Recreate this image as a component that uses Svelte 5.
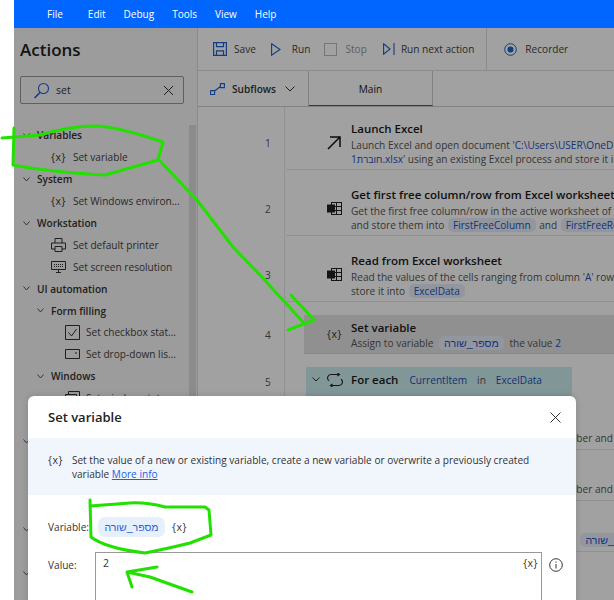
<script>
	const menu = ['File', 'Edit', 'Debug', 'Tools', 'View', 'Help'];

	// sidebar tree: group > sub or action > nested action
	const tree = [
		{ label: 'Variables', kind: 'group' },
		{ label: 'Set variable', kind: 'action', icon: 'x' },
		{ label: 'System', kind: 'group' },
		{ label: 'Set Windows environ...', kind: 'action', icon: 'x' },
		{ label: 'Workstation', kind: 'group' },
		{ label: 'Set default printer', kind: 'action', icon: 'printer' },
		{ label: 'Set screen resolution', kind: 'action', icon: 'screen' },
		{ label: 'UI automation', kind: 'group' },
		{ label: 'Form filling', kind: 'sub' },
		{ label: 'Set checkbox stat...', kind: 'nested', icon: 'check' },
		{ label: 'Set drop-down lis...', kind: 'nested', icon: 'drop' },
		{ label: 'Windows', kind: 'sub' },
		{ label: 'Set window state', kind: 'nested', icon: 'window' },
		{ label: 'Set window visibility', kind: 'nested', icon: 'window' },
		{ label: 'Excel', kind: 'group' },
		{ label: 'Set active worksheet', kind: 'action', icon: 'x' },
		{ label: 'Set cell color', kind: 'action', icon: 'x' },
		{ label: 'Set column width', kind: 'action', icon: 'x' },
		{ label: 'Database', kind: 'group' },
		{ label: 'Set connection', kind: 'action', icon: 'x' },
		{ label: 'Web', kind: 'group' }
	];
</script>

{#snippet excelIcon()}
	<svg width="15" height="13" viewBox="0 0 15 13" fill="none">
		<rect x="4.500" y="0.500" width="10" height="12" stroke="#222" />
		<path d="M4.500 4.500h10M4.500 8.500h10M9.500 0.500v12" stroke="#222" />
		<rect x="0" y="2.500" width="8" height="8" fill="#222" />
	</svg>
{/snippet}

<div class="app">
	<header class="menubar">
		{#each menu as item}
			<span>{item}</span>
		{/each}
	</header>

	<div class="body">
		<aside class="sidebar">
			<h1>Actions</h1>
			<div class="search">
				<svg width="17" height="17" viewBox="0 0 17 17" fill="none" stroke="#1f5fd0" stroke-width="1.100">
					<circle cx="10.500" cy="6.500" r="5" />
					<path d="M7 10.500 1.500 16" stroke-width="1.600" />
				</svg>
				<span class="query">set</span>
				<svg width="11" height="11" viewBox="0 0 11 11" stroke="#333" stroke-width="1">
					<path d="M1 1l9 9M10 1l-9 9" />
				</svg>
			</div>
			<div class="tree">
				{#each tree as node}
					<div class="node {node.kind}">
						{#if node.kind === 'group' || node.kind === 'sub'}
							<svg width="7" height="5" viewBox="0 0 7 5" fill="none" stroke="#555">
								<path d="M.5.500 3.500 4 6.500.5" />
							</svg>
						{:else if node.icon === 'x'}
							<span class="varicon">{'{x}'}</span>
						{:else if node.icon === 'printer'}
							<svg width="15" height="14" viewBox="0 0 15 14" fill="none" stroke="#333">
								<path d="M4 5V.5h7V5M4 11H.5V5h14v6H11M4 8.500h7v5H4z" />
							</svg>
						{:else if node.icon === 'screen'}
							<svg width="15" height="12" viewBox="0 0 15 12" fill="none" stroke="#333">
								<path d="M.5.500h14v8H.5zM7.500 8.500v3M5 11.500h5" />
								<path d="M3 3.500h9M3 5.500h9" stroke-dasharray="1 1" />
							</svg>
						{:else if node.icon === 'check'}
							<svg width="15" height="15" viewBox="0 0 15 15" fill="none" stroke="#333">
								<path d="M.5.500h14v14H.5zM3.500 7.500 6.500 11 11.500 4" />
							</svg>
						{:else if node.icon === 'drop'}
							<svg width="15" height="10" viewBox="0 0 15 10" fill="none" stroke="#333">
								<path d="M.5.500h14v9H.5zM10 4h2" />
							</svg>
						{:else if node.icon === 'window'}
							<svg width="15" height="14" viewBox="0 0 15 14" fill="none" stroke="#333">
								<path d="M3.500 3V.5h11v9H12M.5 3.500h11v10H.5zM.5 6h11" />
							</svg>
						{/if}
						<span>{node.label}</span>
					</div>
				{/each}
			</div>
			<div class="scrollbar"></div>
		</aside>

		<main class="main">
			<div class="toolbar">
				<div class="tool save">
					<svg width="14" height="14" viewBox="0 0 14 14" fill="none" stroke="#1f5fd0" stroke-width="1.200">
						<path d="M.6.600h12.800v12.800H.6zM3.500.600v4h7v-4M3.500 13.400v-4.500h7v4.500" />
					</svg>
					<span>Save</span>
				</div>
				<div class="tool run">
					<svg width="10" height="13" viewBox="0 0 10 13" fill="none" stroke="#1f5fd0" stroke-width="1.100">
						<path d="M.6.800 9 6.500.6 12.200z" />
					</svg>
					<span>Run</span>
				</div>
				<div class="tool stop">
					<span class="stopbox"></span>
					<span class="muted">Stop</span>
				</div>
				<div class="tool next">
					<svg width="12" height="12" viewBox="0 0 12 12" fill="none" stroke="#1f5fd0" stroke-width="1.100">
						<path d="M.6.800 7 6 .6 11.200zM11 0v12" />
					</svg>
					<span>Run next action</span>
				</div>
				<div class="tool recorder">
					<svg width="13" height="13" viewBox="0 0 13 13" fill="none">
						<circle cx="6.500" cy="6.500" r="5.800" stroke="#1f5fd0" />
						<circle cx="6.500" cy="6.500" r="3" fill="#1f5fd0" />
					</svg>
					<span>Recorder</span>
				</div>
			</div>

			<div class="tabs">
				<div class="subflows">
					<svg width="15" height="12" viewBox="0 0 15 12" fill="none" stroke="#1f5fd0" stroke-width="1.100">
						<path d="M.6 7.600h4v4h-4zM10.400.6h4v4h-4zM4.600 8 10.400 3.500" />
					</svg>
					<span>Subflows</span>
					<svg width="10" height="6" viewBox="0 0 10 6" fill="none" stroke="#333">
						<path d="M.5.500 5 5 9.500.5" />
					</svg>
				</div>
				<div class="tab">Main</div>
			</div>

			<div class="flow">
				<div class="gutter-line"></div>

				<div class="row first">
					<span class="num">1</span>
					<span class="rowicon">
						<svg width="14" height="14" viewBox="0 0 14 14" fill="none" stroke="#111" stroke-width="1.500">
							<path d="M1 13 13 1M3 1h10v10" />
						</svg>
					</span>
					<div class="rowtext">
						<div class="title">Launch Excel</div>
						<div class="desc">Launch Excel and open document <span class="val">'C:\Users\USER\OneDrive\Desktop\</span></div>
						<div class="desc"><span class="val">חוברת1.xlsx'</span> using an existing Excel process and store it into</div>
					</div>
				</div>

				<div class="row">
					<span class="num">2</span>
					<span class="rowicon">{@render excelIcon()}</span>
					<div class="rowtext">
						<div class="title">Get first free column/row from Excel worksheet</div>
						<div class="desc">Get the first free column/row in the active worksheet of the Excel</div>
						<div class="desc">and store them into <span class="pill">FirstFreeColumn</span> and <span class="pill">FirstFreeRow</span></div>
					</div>
				</div>

				<div class="row">
					<span class="num">3</span>
					<span class="rowicon">{@render excelIcon()}</span>
					<div class="rowtext">
						<div class="title">Read from Excel worksheet</div>
						<div class="desc">Read the values of the cells ranging from column <span class="val">'A'</span> row and</div>
						<div class="desc">store it into <span class="pill">ExcelData</span></div>
					</div>
				</div>

				<div class="row selected">
					<span class="num">4</span>
					<span class="rowicon varicon">{'{x}'}</span>
					<div class="rowtext">
						<div class="title">Set variable</div>
						<div class="desc">Assign to variable <span class="pill he">מספר_שורה</span> the value <span class="val">2</span></div>
					</div>
				</div>

				<div class="row loop">
					<span class="num">5</span>
					<div class="loopbar">
						<svg width="8" height="5" viewBox="0 0 8 5" fill="none" stroke="#333">
							<path d="M.5.500 4 4 7.500.5" />
						</svg>
						<svg width="16" height="14" viewBox="0 0 16 14" fill="none" stroke="#222" stroke-width="1.100">
							<path d="M12 1.500h-8a3.500 3.500 0 0 0-2 6.300M4 12.500h8a3.500 3.500 0 0 0 2-6.300M10.500 0 12.500 1.500 10.500 3M5.500 11 3.500 12.500 5.500 14" />
						</svg>
						<span class="title">For each</span>
						<span class="val">CurrentItem</span>
						<span class="desc in">in</span>
						<span class="val">ExcelData</span>
					</div>
				</div>

				<div class="row nested">
					<div class="rowtext">
						<div class="title">Convert text to number</div>
						<div class="desc">Convert the text in the current column to a number and</div>
					</div>
				</div>
				<div class="row nested">
					<div class="rowtext">
						<div class="title">Convert text to number</div>
						<div class="desc">Convert the text in the current column to a number and</div>
					</div>
				</div>
				<div class="row nested">
					<div class="rowtext">
						<div class="title">Write to Excel worksheet</div>
						<div class="desc">Write the value of the current cell into a column <span class="pill he">מספר_שורה</span></div>
					</div>
				</div>
			</div>
		</main>

		<div class="scrim"></div>
	</div>

	<section class="dialog">
		<div class="dialog-head">
			<h2>Set variable</h2>
			<svg width="11" height="11" viewBox="0 0 11 11" stroke="#333" stroke-width="1">
				<path d="M.5.500l10 10M10.500.500l-10 10" />
			</svg>
		</div>
		<div class="info">
			<span class="varicon">{'{x}'}</span>
			<p>Set the value of a new or existing variable, create a new variable or overwrite a previously created variable <a href="#info">More info</a></p>
		</div>
		<div class="field variable">
			<span class="label">Variable:</span>
			<span class="varpill">מספר_שורה</span>
			<span class="varicon">{'{x}'}</span>
		</div>
		<div class="field value">
			<span class="label">Value:</span>
			<div class="input">
				<span>2</span>
				<span class="varicon">{'{x}'}</span>
			</div>
			<svg class="infoicon" width="14" height="14" viewBox="0 0 14 14" fill="none" stroke="#333">
				<circle cx="7" cy="7" r="6.300" />
				<path d="M7 6v4.500M7 3.500v1.200" />
			</svg>
		</div>
	</section>

	<!-- green marker scribbled over the screenshot -->
	<svg class="marker" width="614" height="600" viewBox="0 0 614 600" fill="none" stroke="#22e000" stroke-width="3" stroke-linecap="round" stroke-linejoin="round">
		<path d="M2 138 40 135Q70 126 95 126 115 126 163 142L158 160Q130 168 105 175 50 172 13 165L14 128" />
		<path d="M160 161 197 200 233 247 260 275 303 322" />
		<path d="M291 295 314 320 288 330" />
		<path d="M90 500 91 537Q105 548 145 553 170 548 190 543L211 535 209 510 205 507H165Q145 502 130 503L90 506" />
		<path d="M192 592 150 577 127 572 132 587M127 572 157 567" />
	</svg>
</div>

<style>
	:global(body) {
		background: #fff;
	}

	.app {
		position: relative;
		width: 614px;
		height: 600px;
		overflow: hidden;
		font-family: 'Open Sans', 'Liberation Sans', sans-serif;
		font-size: 10.100px;
		color: #333;
		padding-left: 14px;
		box-sizing: border-box;
		background: #fff;
	}

	.menubar {
		height: 28px;
		background: #0066ff;
		color: #fff;
		display: flex;
		align-items: center;
		gap: 18px;
		padding-left: 33px;
		font-size: 10px;
	}

	.menubar span:first-child {
		margin-right: 7px;
	}

	.body {
		position: relative;
		display: flex;
		height: 572px;
		background: #fff;
	}

	.scrim {
		position: absolute;
		inset: 0;
		background: rgba(0, 0, 0, 0.37);
	}

	.sidebar {
		position: relative;
		width: 183px;
		flex-shrink: 0;
		background: #f7f7f7;
		border-right: 1px solid #ddd;
	}

	h1 {
		margin: 10px 0 0 6px;
		font-size: 17px;
		font-weight: 600;
		color: #222;
		line-height: 24px;
	}

	.search {
		display: flex;
		align-items: center;
		height: 26px;
		margin: 14px 0 0 6px;
		width: 141px;
		border: 1px solid #999;
		border-radius: 2px;
		padding: 0 9px 0 12px;
		gap: 6px;
	}

	.query {
		flex: 1;
		font-size: 10.500px;
	}

	.tree {
		margin-top: 20.500px;
	}

	.node {
		display: flex;
		align-items: center;
		height: 21.900px;
		white-space: nowrap;
	}

	.node.group {
		font-weight: 600;
		padding-left: 9px;
		gap: 7px;
	}

	.node.sub {
		font-weight: 600;
		padding-left: 23px;
		gap: 7px;
	}

	.node.action {
		padding-left: 37px;
		gap: 7px;
		color: #444;
	}

	.node.nested {
		padding-left: 51px;
		gap: 6px;
		color: #444;
	}

	.varicon {
		font-size: 10.500px;
		letter-spacing: 0.500px;
		color: #333;
	}

	.scrollbar {
		position: absolute;
		left: 175px;
		top: 97px;
		bottom: 0;
		width: 7px;
		background: #dcdcdc;
	}

	.main {
		flex: 1;
		min-width: 0;
		background: #fff;
	}

	.toolbar {
		display: flex;
		align-items: center;
		height: 43px;
		padding-left: 15px;
		border-bottom: 1px solid #ddd;
		box-sizing: border-box;
	}

	.tool {
		display: flex;
		align-items: center;
		gap: 7px;
		color: #444;
	}

	.run {
		margin-left: 15px;
		gap: 11px;
	}

	.stop {
		margin-left: 14px;
		gap: 8px;
	}

	.stopbox {
		width: 11px;
		height: 11px;
		border: 1px solid #bbb;
	}

	.muted {
		color: #999;
	}

	.next {
		margin-left: 16px;
		gap: 6px;
	}

	.recorder {
		margin-left: 12px;
		padding-left: 17px;
		border-left: 1px solid #ddd;
		height: 43px;
		gap: 8px;
	}

	.tabs {
		display: flex;
		height: 36px;
		border-bottom: 1px solid #ccc;
		box-sizing: border-box;
	}

	.subflows {
		display: flex;
		align-items: center;
		gap: 7px;
		width: 111px;
		padding-left: 12px;
		box-sizing: border-box;
		font-weight: 600;
		border-right: 1px solid #ccc;
		flex-shrink: 0;
	}

	.subflows svg:last-child {
		margin-left: 2px;
	}

	.tab {
		width: 124px;
		text-align: center;
		line-height: 36px;
		border-right: 1px solid #ccc;
		border-bottom: 1px solid #1f5fd0;
		box-sizing: border-box;
		color: #222;
	}

	.flow {
		position: relative;
	}

	.gutter-line {
		position: absolute;
		left: 86px;
		top: 0;
		height: 600px;
		border-left: 1px solid #e6e6e6;
	}

	.row {
		position: relative;
		display: flex;
		align-items: flex-start;
		height: 66px;
		margin-left: 88px;
		padding: 17px 0 0 65px;
		border-bottom: 1px solid #e6e6e6;
		box-sizing: border-box;
		white-space: nowrap;
	}

	.row.first {
		height: 63px;
		padding-top: 14px;
	}

	.num {
		position: absolute;
		top: 32px;
		left: -18px;
		color: #555;
		transform: translateX(-50%);
	}

	.rowicon {
		position: absolute;
		top: 32px;
		left: 41px;
		display: flex;
	}

	.first .num,
	.first .rowicon {
		top: 29px;
	}

	.title {
		font-size: 11.500px;
		font-weight: 600;
		color: #1a1a1a;
		line-height: 15px;
		margin-bottom: 2px;
	}

	.desc {
		line-height: 14px;
		color: #555;
	}

	.val {
		color: #1f4fc0;
	}

	.pill {
		display: inline-block;
		line-height: 14px;
		margin: 0 1px;
		padding: 0 5px;
		border-radius: 5px;
		background: #e8f0fc;
		color: #1f4fc0;
	}

	.pill.he {
		font-family: 'Liberation Sans', sans-serif;
		font-size: 10.600px;
		margin: 0 3px;
	}

	.row.selected {
		height: 52px;
		border-bottom: none;
		padding-top: 18px;
	}

	.row.selected::before {
		content: '';
		position: absolute;
		left: 18px;
		right: 0;
		top: 13px;
		bottom: 0;
		background: #e4e4e4;
		border-bottom: 1px solid #d6d6d6;
	}

	.row.selected .rowtext {
		position: relative;
	}

	.row.selected .desc {
		margin-top: -1px;
	}

	.row.selected .rowicon {
		top: 25px;
	}

	.row.selected .num {
		top: 26px;
	}

	.row.loop {
		height: 45px;
		border-bottom: none;
		padding: 0;
	}

	.row.loop .num {
		top: 21px;
	}

	.loopbar {
		margin: 13px 0 0 20px;
		width: 266px;
		height: 32px;
		background: #cdeeee;
		display: flex;
		align-items: center;
		gap: 7px;
		padding: 0 0 7px 6px;
		box-sizing: border-box;
		flex-shrink: 0;
	}

	.loopbar .title {
		margin: 0 4px 0 1px;
	}

	.in {
		margin: 0 3px;
	}

	.row.nested {
		height: 51px;
		padding-top: 15px;
	}

	.dialog {
		position: absolute;
		left: 28px;
		top: 396px;
		width: 548px;
		height: 260px;
		background: #fff;
		border-radius: 6px;
		box-shadow: 0 0 6px rgba(0, 0, 0, 0.150);
	}

	.dialog-head {
		display: flex;
		align-items: center;
		justify-content: space-between;
		height: 42px;
		padding: 0 15px 0 20px;
	}

	h2 {
		margin: 0;
		font-size: 13px;
		font-weight: 600;
		color: #222;
	}

	.info {
		display: flex;
		gap: 9px;
		height: 57px;
		padding: 15px 30px 0 20px;
		box-sizing: border-box;
		background: #f1f6fd;
	}

	.info p {
		margin: 0;
		line-height: 14px;
		color: #333;
		flex: 1;
	}

	.info a {
		color: #1f5fe0;
		text-decoration: underline;
	}

	.field {
		display: flex;
	}

	.label {
		width: 47px;
		color: #333;
		flex-shrink: 0;
		font-size: 10.100px;
	}

	.variable {
		align-items: center;
		padding: 22px 0 0 20px;
	}

	.varpill {
		display: inline-block;
		width: 67px;
		height: 20px;
		line-height: 20px;
		margin-left: 3px;
		text-align: center;
		border-radius: 7px;
		background: #e6effc;
		color: #2b5fd9;
		font-size: 10.500px;
		font-family: 'Liberation Sans', sans-serif;
	}

	.variable .varicon {
		margin-left: 7px;
	}

	.value {
		position: relative;
		padding: 15px 0 0 20px;
	}

	.value .label {
		padding-top: 6px;
	}

	.input {
		display: flex;
		justify-content: space-between;
		width: 447px;
		height: 80px;
		padding: 3px 3px 0 7px;
		box-sizing: border-box;
		border: 1px solid #999;
		color: #333;
		font-size: 10.500px;
	}

	.infoicon {
		margin: 6px 0 0 7px;
	}

	.marker {
		position: absolute;
		left: 0;
		top: 0;
		pointer-events: none;
	}
</style>
